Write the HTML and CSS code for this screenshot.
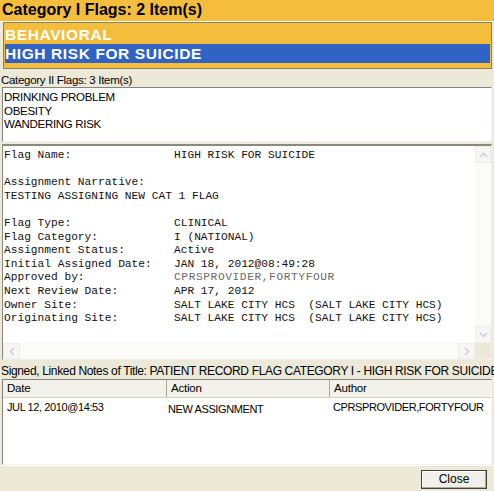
FILE: index.html
```html
<!DOCTYPE html>
<html>
<head>
<meta charset="utf-8">
<link rel="stylesheet" href="styles.css">
</head>
<body>
<div class="window">
  <div class="cat1-header">Category I Flags: 2 Item(s)</div>
  <div class="cat1-list">
    <div class="cat1-item">BEHAVIORAL</div>
    <div class="cat1-item selected">HIGH RISK FOR SUICIDE</div>
  </div>
  <div class="panel">
    <div class="label">Category II Flags: 3 Item(s)</div>
    <div class="cat2-list">
      <div class="cat2-item">DRINKING PROBLEM</div>
      <div class="cat2-item">OBESITY</div>
      <div class="cat2-item">WANDERING RISK</div>
    </div>
    <div class="memo">
      <div class="memo-body">
        <div class="memo-text">
          <div class="row"><span class="k">Flag Name:</span><span>HIGH RISK FOR SUICIDE</span></div>
          <div class="row blank"></div>
          <div class="row"><span>Assignment Narrative:</span></div>
          <div class="row"><span>TESTING ASSIGNING NEW CAT 1 FLAG</span></div>
          <div class="row blank"></div>
          <div class="row"><span class="k">Flag Type:</span><span>CLINICAL</span></div>
          <div class="row"><span class="k">Flag Category:</span><span>I (NATIONAL)</span></div>
          <div class="row"><span class="k">Assignment Status:</span><span>Active</span></div>
          <div class="row"><span class="k">Initial Assigned Date:</span><span>JAN 18, 2012@08:49:28</span></div>
          <div class="row"><span class="k">Approved by:</span><span class="faded">CPRSPROVIDER,FORTYFOUR</span></div>
          <div class="row"><span class="k">Next Review Date:</span><span>APR 17, 2012</span></div>
          <div class="row"><span class="k">Owner Site:</span><span>SALT LAKE CITY HCS  (SALT LAKE CITY HCS)</span></div>
          <div class="row"><span class="k">Originating Site:</span><span>SALT LAKE CITY HCS  (SALT LAKE CITY HCS)</span></div>
        </div>
        <div class="vscroll">
          <div class="sbtn"><svg width="9" height="6" viewBox="0 0 9 6"><path d="M1 5 L4.5 1.5 L8 5" fill="none" stroke="#c8cdd8" stroke-width="1.5"/></svg></div>
          <div class="strack"></div>
          <div class="sbtn"><svg width="9" height="6" viewBox="0 0 9 6"><path d="M1 1 L4.5 4.5 L8 1" fill="none" stroke="#c8cdd8" stroke-width="1.5"/></svg></div>
        </div>
      </div>
      <div class="hscroll">
        <div class="sbtn h"><svg width="6" height="9" viewBox="0 0 6 9"><path d="M5 1 L1.5 4.5 L5 8" fill="none" stroke="#c8cdd8" stroke-width="1.5"/></svg></div>
        <div class="strack"></div>
        <div class="sbtn h"><svg width="6" height="9" viewBox="0 0 6 9"><path d="M1 1 L4.5 4.5 L1 8" fill="none" stroke="#c8cdd8" stroke-width="1.5"/></svg></div>
        <div class="corner"></div>
      </div>
    </div>
    <div class="label notes-label">Signed, Linked Notes of Title: PATIENT RECORD FLAG CATEGORY I - HIGH RISK FOR SUICIDE</div>
    <div class="listview">
      <div class="lv-head">
        <div class="col c1">Date</div>
        <div class="col c2">Action</div>
        <div class="col c3">Author</div>
      </div>
      <div class="lv-row">
        <div class="cell c1">JUL 12, 2010@14:53</div>
        <div class="cell c2 low">NEW ASSIGNMENT</div>
        <div class="cell c3">CPRSPROVIDER,FORTYFOUR</div>
      </div>
    </div>
  </div>
  <div class="footer">
    <button class="close-btn">Close</button>
  </div>
</div>
</body>
</html>
```
FILE: styles.css
```css
* { box-sizing: border-box; }
html, body { margin: 0; padding: 0; }
body {
  width: 494px;
  height: 491px;
  overflow: hidden;
  background: #ece9d8;
  font-family: "Liberation Sans", Arial, sans-serif;
}
.window { width: 494px; height: 491px; display: flex; flex-direction: column; }

.cat1-header {
  height: 22px;
  flex: none;
  background: #f4bd3c;
  font-weight: bold;
  font-size: 16px;
  line-height: 20px;
  padding-left: 2px;
  color: #000;
  border-bottom: 1px solid #fff;
}
.cat1-list {
  flex: none;
  margin: 0 2px 0 3px;
  height: 47px;
  background: #f4bd3c;
  border: 1px solid #8a8066;
  padding: 2px 1px 0 1px;
}
.cat1-item {
  height: 19px;
  font-size: 15.5px;
  font-weight: bold;
  line-height: 19px;
  color: #fff;
  padding-left: 0;
  letter-spacing: 0.6px;
}
.cat1-item.selected { background: #3063c4; }

.panel { display: flex; flex-direction: column; flex: none; }
.label {
  flex: none;
  font-size: 11.5px;
  line-height: 14px;
  height: 18px;
  padding: 4px 0 0 1px;
  color: #000;
  letter-spacing: -0.3px;
  white-space: nowrap;
  overflow: hidden;
}
.cat2-list {
  flex: none;
  margin: 0 2px 0 2px;
  height: 55px;
  background: #fff;
  border-top: 1px solid #848284;
  border-left: 1px solid #848284;
  border-right: 1px solid #f4f3ee;
  border-bottom: 1px solid #f4f3ee;
  padding: 3px 0 0 1px;
}
.cat2-item { font-size: 11.5px; line-height: 13.5px; letter-spacing: -0.3px; color: #000; }

.memo {
  flex: none;
  margin: 2px 2px 0 2px;
  height: 216px;
  background: #fff;
  border-top: 2px solid #8b887c;
  border-left: 1px solid #8b887c;
  border-right: 1px solid #eee;
  border-bottom: 1px solid #eee;
  display: flex;
  flex-direction: column;
  overflow: hidden;
}
.memo-body { flex: 1; display: flex; min-height: 0; }
.memo-text {
  flex: 1;
  padding: 3px 0 0 1px;
  font-family: "Liberation Mono", "Courier New", monospace;
  font-size: 11.2px;
  color: #111;
  overflow: hidden;
}
.row { display: flex; height: 13.6px; line-height: 13.6px; white-space: pre; }
.row .k { width: 170px; flex: none; }
.faded { color: #6a6a6a; letter-spacing: 0.6px; }

.vscroll {
  width: 16px;
  flex: none;
  display: flex;
  flex-direction: column;
  background: #fbfbf8;
}
.sbtn {
  width: 16px;
  height: 17px;
  flex: none;
  display: flex;
  align-items: center;
  justify-content: center;
  background: #f6f6f2;
  border: 1px solid #eeeee8;
}
.sbtn.h { width: 17px; height: 16px; }
.strack { flex: 1; background: #fbfbf8; }
.hscroll {
  height: 16px;
  flex: none;
  display: flex;
  background: #fbfbf8;
}
.corner { width: 16px; flex: none; background: #ece9d8; }

.notes-label { height: 19px; padding-top: 4px; font-size: 12px; letter-spacing: -0.35px; }
.listview {
  flex: none;
  margin: 0 2px 0 2px;
  height: 86px;
  background: #fff;
  border-top: 1px solid #848284;
  border-left: 1px solid #848284;
  border-right: 1px solid #f4f3ee;
  border-bottom: 1px solid #f4f3ee;
}
.lv-head { display: flex; height: 18px; background: #f2f1ea; border-bottom: 1px solid #d6d2c2; }
.col {
  font-size: 11.5px;
  line-height: 17px;
  padding-left: 4px;
  color: #000;
  border-right: 1px solid #aca899;
  letter-spacing: -0.2px;
}
.c1 { width: 164px; }
.c2 { width: 163px; }
.c3 { flex: 1; border-right: none; }
.lv-row { display: flex; padding-top: 2px; }
.cell { font-size: 11px; line-height: 14px; padding-left: 4px; letter-spacing: -0.4px; color: #000; }
.cell.c2 { padding-top: 2px; padding-left: 1px; }
.cell.c3 { padding-left: 3px; }

.footer {
  flex: 1;
  display: flex;
  justify-content: flex-end;
  align-items: flex-start;
  padding: 4px 7px 0 0;
  border-top: 1px solid #fff;
}
.close-btn {
  width: 66px;
  height: 19px;
  font-family: "Liberation Sans", Arial, sans-serif;
  font-size: 12px;
  line-height: 15px;
  padding: 0;
  background: #f0efe8;
  border: 1px solid #404040;
  box-shadow: inset -1px -1px 0 #aca899, inset 1px 1px 0 #fff;
  color: #000;
}
```
